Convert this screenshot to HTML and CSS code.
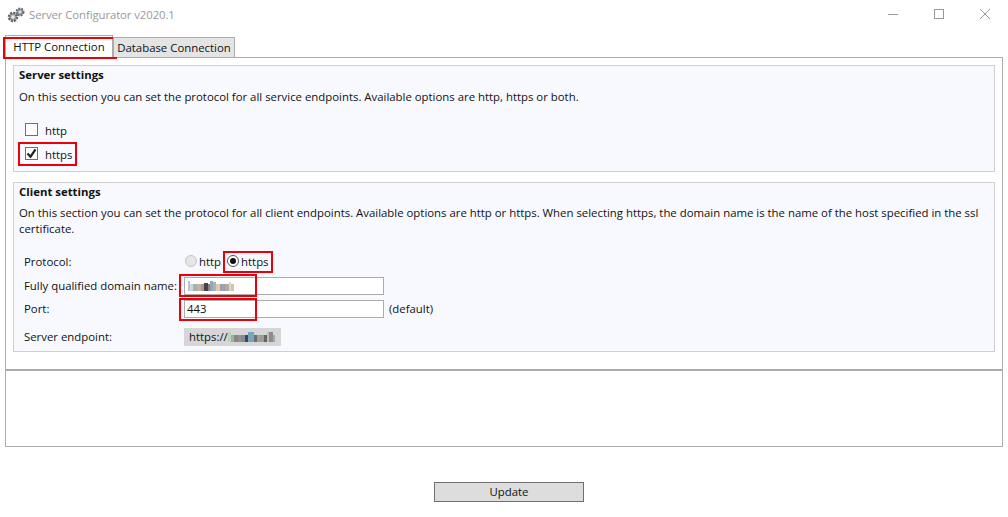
FILE: index.html
```html
<!DOCTYPE html>
<html lang="en">
<head>
<meta charset="utf-8">
<title>Server Configurator v2020.1</title>
<link rel="stylesheet" href="styles.css">
</head>
<body>
<div class="window">
  <header class="titlebar">
    <svg class="app-icon" width="18" height="18" viewBox="0 0 18 18">
      <circle cx="13" cy="6" r="3.4" fill="#9aa0a6" stroke="#6e7276" stroke-width="2.2" stroke-dasharray="1.8 1"/>
      <circle cx="13" cy="6" r="1.3" fill="#e4e6e8"/>
      <circle cx="6" cy="11" r="4" fill="#a4a9ae" stroke="#64686c" stroke-width="2.6" stroke-dasharray="2 1.1"/>
      <circle cx="6" cy="11" r="1.7" fill="#e8eaec"/>
    </svg>
    <span class="title">Server Configurator v2020.1</span>
    <div class="window-controls">
      <svg width="12" height="12" viewBox="0 0 12 12"><path d="M1 6.5h10" stroke="#999" fill="none"/></svg>
      <svg width="12" height="12" viewBox="0 0 12 12"><rect x="1.5" y="1.5" width="9" height="9" stroke="#999" fill="none"/></svg>
      <svg width="12" height="12" viewBox="0 0 12 12"><path d="M1 1l10 10M11 1L1 11" stroke="#999" fill="none"/></svg>
    </div>
  </header>

  <nav class="tabs">
    <div class="tab tab-active">HTTP Connection<span class="mark mark-tab"></span></div>
    <div class="tab">Database Connection</div>
  </nav>

  <main class="tab-panel">
    <section class="group group-server">
      <h2 class="group-title">Server settings</h2>
      <p class="group-text">On this section you can set the protocol for all service endpoints. Available options are http, https or both.</p>
      <div class="checks">
        <div class="check-row"><span class="checkbox"></span><span>http</span></div>
        <div class="check-row">
          <span class="checkbox"><svg width="11" height="11" viewBox="0 0 11 11"><path d="M1.5 5.5l3 3.2 5-7.4" fill="none" stroke="#222" stroke-width="2.2"/></svg></span>
          <span>https</span>
          <span class="mark mark-check"></span>
        </div>
      </div>
    </section>

    <section class="group group-client">
      <h2 class="group-title">Client settings</h2>
      <p class="group-text group-text-tight">On this section you can set the protocol for all client endpoints. Available options are http or https. When selecting https, the domain name is the name of the host specified in the ssl certificate.</p>
      <div class="form">
        <div class="form-row row-protocol">
          <span class="form-label">Protocol:</span>
          <span class="radio radio-off"></span><span class="radio-text">http</span>
          <span class="radio radio-on"></span><span class="radio-text">https</span>
          <span class="mark mark-radio"></span>
        </div>
        <div class="form-row row-domain">
          <span class="form-label">Fully qualified domain name:</span>
          <span class="input">
            <svg class="blur" width="48" height="10" viewBox="0 0 48 10">
              <rect x="1" y="0" width="2" height="10" fill="#c8bcdc"/>
              <rect x="3" y="3" width="3" height="7" fill="#c8d8dc"/>
              <rect x="6" y="3" width="4" height="7" fill="#a8b0b4"/>
              <rect x="10" y="3" width="4" height="7" fill="#c4b498"/>
              <rect x="14" y="3" width="3" height="7" fill="#a09c98"/>
              <rect x="17" y="2" width="4" height="8" fill="#4c4044"/>
              <rect x="21" y="3" width="2" height="7" fill="#a0787c"/>
              <rect x="23" y="0" width="3" height="10" fill="#88aac0"/>
              <rect x="26" y="1" width="3" height="9" fill="#a8b4bc"/>
              <rect x="29" y="3" width="4" height="7" fill="#e0cc9c"/>
              <rect x="33" y="3" width="5" height="7" fill="#a49cb4"/>
              <rect x="38" y="3" width="4" height="7" fill="#b4a8a4"/>
              <rect x="42" y="1" width="2" height="9" fill="#e4d4c0"/>
              <rect x="44" y="3" width="3" height="7" fill="#ccc4bc"/>
            </svg>
          </span>
          <span class="mark mark-input"></span>
        </div>
        <div class="form-row row-port">
          <span class="form-label">Port:</span>
          <span class="input">443</span>
          <span class="hint">(default)</span>
          <span class="mark mark-input"></span>
        </div>
        <div class="form-row row-endpoint">
          <span class="form-label">Server endpoint:</span>
          <span class="endpoint">https://
            <svg class="blur" width="48" height="10" viewBox="0 0 48 10">
              <rect x="0" y="0" width="3" height="10" fill="#b8d8b4"/>
              <rect x="3" y="3" width="3" height="7" fill="#a4acac"/>
              <rect x="6" y="3" width="4" height="7" fill="#80888c"/>
              <rect x="10" y="3" width="3" height="7" fill="#98908c"/>
              <rect x="13" y="3" width="4" height="7" fill="#848c98"/>
              <rect x="17" y="3" width="3" height="7" fill="#3c4860"/>
              <rect x="20" y="0" width="6" height="10" fill="#78a4c0"/>
              <rect x="26" y="3" width="3" height="7" fill="#6c6c74"/>
              <rect x="29" y="3" width="3" height="7" fill="#b09c84"/>
              <rect x="32" y="3" width="4" height="7" fill="#949ca8"/>
              <rect x="36" y="3" width="3" height="7" fill="#6c6458"/>
              <rect x="39" y="0" width="2" height="10" fill="#c4bcb4"/>
              <rect x="41" y="0" width="4" height="10" fill="#8c8c94"/>
              <rect x="45" y="3" width="2" height="7" fill="#a8a8a8"/>
            </svg>
          </span>
        </div>
      </div>
    </section>
  </main>

  <div class="log-panel"></div>

  <footer class="actions">
    <button class="update" type="button">Update</button>
  </footer>
</div>
</body>
</html>
```
FILE: styles.css
```css
* { box-sizing: border-box; }
html, body { margin: 0; padding: 0; background: #fff; }
body { width: 1008px; height: 517px; overflow: hidden; font-family: "Open Sans", "Noto Sans", sans-serif; font-size: 11.38px; line-height: 16px; color: #111; }
.window { display: flex; flex-direction: column; height: 100%; }

.titlebar { display: flex; align-items: center; height: 30px; padding-left: 7px; flex: none; }
.app-icon { flex: none; margin-right: 4px; }
.title { color: #999; letter-spacing: -0.1px; }
.window-controls { display: flex; gap: 34px; margin-left: auto; padding-right: 17px; padding-bottom: 2px; }

.tabs { display: flex; height: 27px; padding-left: 5px; flex: none; align-items: flex-end; position: relative; z-index: 1; }
.tab { position: relative; height: 20px; width: 122px; background: #e4e4e4; border: 1px solid #acacac; border-bottom: 0; text-align: center; line-height: 20px; }
.tab-active { width: 108px; height: 23px; line-height: 22px; background: #fff; border-bottom: 1px solid #fff; margin-bottom: -1px; }

.tab-panel { height: 314px; margin: 0 5px; border: 1px solid #acacac; border-bottom: 2px solid #acacac; padding: 7px 7px 0; flex: none; }
.group { background: #f8f9ff; border: 1px solid #d0d0d4; padding: 0 5px; }
.group-server { height: 107px; margin-bottom: 10px; }
.group-client { height: 170px; }
.group-title { margin: 1px 0 0; font-size: inherit; line-height: 16px; font-weight: 700; }
.group-text { margin: 6px 0 0; line-height: 16px; }
.group-text-tight { margin-top: 5px; }

.checks { margin-top: 14px; padding-left: 6px; }
.check-row { position: relative; display: flex; align-items: center; gap: 7px; height: 24px; }
.checkbox { display: flex; align-items: center; justify-content: center; width: 13px; height: 13px; margin-bottom: 3px; background: #fff; border: 1px solid #707070; }

.form { margin-top: 13px; padding-left: 5px; }
.form-row { position: relative; display: flex; align-items: center; height: 24px; }
.form-label { width: 160px; flex: none; }
.row-port { height: 22px; }
.row-endpoint { margin-top: 8px; height: 18px; }
.radio { width: 12px; height: 12px; border-radius: 50%; flex: none; margin-right: 2px; margin-left: 1px; margin-bottom: 2px; border: 1px solid #c4c4c4; background: #e6e6e6; }
.radio-on { position: relative; margin-left: 6px; border: 1px solid #555; background: #fff; }
.radio-on::after { content: ""; position: absolute; left: 2px; top: 2px; width: 6px; height: 6px; border-radius: 50%; background: #111; }
.input { display: flex; align-items: center; width: 200px; height: 18px; flex: none; padding-left: 2px; background: #fff; border: 1px solid #acacac; }
.hint { margin-left: 5px; }
.endpoint { display: flex; align-items: center; gap: 0; width: 97px; height: 18px; padding-left: 5px; background: #d6d6d6; }
.blur { display: block; flex: none; }

.log-panel { height: 76px; margin: 0 5px; border: 1px solid #acacac; border-top: 0; flex: none; }
.actions { display: flex; justify-content: center; padding-top: 35px; padding-left: 10px; }
.update { width: 150px; height: 20px; padding: 0; background: #ddd; border: 1px solid #707070; font: inherit; color: #111; line-height: 18px; }

.mark { position: absolute; border: 2px solid #e8000b; pointer-events: none; }
.mark-tab { left: -3px; top: 1px; width: 114px; height: 22px; }
.mark-check { left: -7px; top: -1px; width: 59px; height: 24px; }
.mark-radio { left: 199px; top: 1px; width: 50px; height: 22px; }
.mark-input { left: 155px; top: 0; width: 78px; height: 23px; }
```
